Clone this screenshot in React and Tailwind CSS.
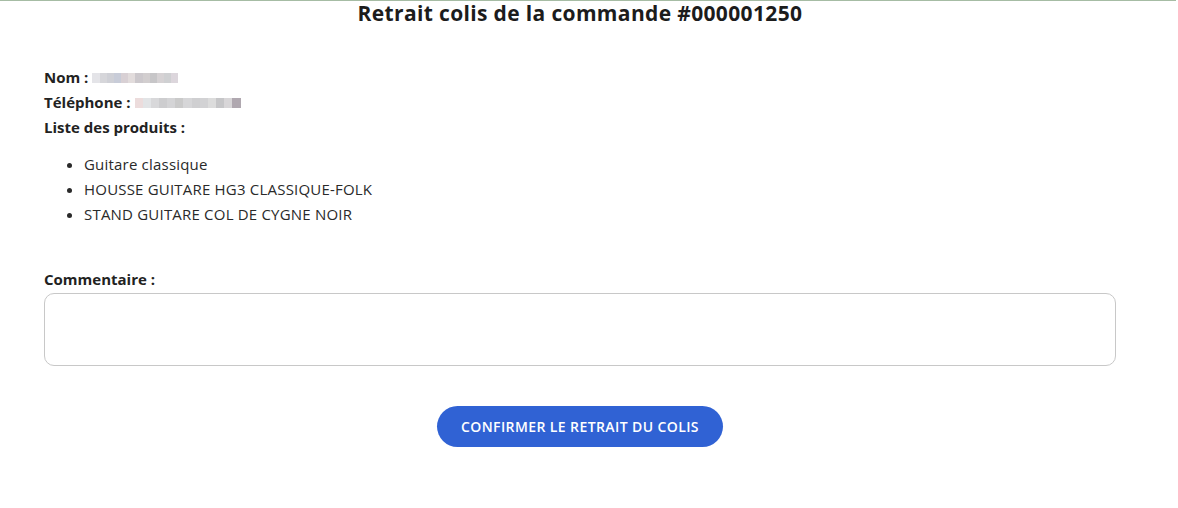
import React from "react";

function Blur({ w, colors }) {
  return (
    <span className="inline-flex align-middle h-[10px]" style={{ width: w }}>
      {colors.map((c, i) => (
        <span key={i} className="flex-1 h-full" style={{ background: c }} />
      ))}
    </span>
  );
}

export default function App() {
  return (
    <div className="w-[1178px] h-[508px] bg-white text-[#222] overflow-hidden" style={{ fontFamily: '"Open Sans", "Noto Sans", sans-serif' }}>
      <div className="h-px w-[1176px] bg-[#a6bca4]" />
      <div className="w-[1160px] px-[44px]">
        <h1 className="text-center text-[21px] font-bold leading-[25px] text-[#1c1c1c] tracking-[0.35px]">
          Retrait colis de la commande #000001250
        </h1>
        <div className="mt-[39px] text-[15px] leading-[25px]">
          <div className="font-bold flex items-center gap-[4px]">
            <span>Nom :</span>
            <Blur w={86} colors={["#e4e4e8", "#d6d6da", "#cfd0d6", "#c8ccd8", "#d8d0d4", "#e2dcdc", "#ccc8cc", "#d2cecf", "#c7c6c8", "#d6d2d4", "#cfd0d2", "#dcd6dc"]} />
          </div>
          <div className="font-bold flex items-center gap-[4px]">
            <span>Téléphone :</span>
            <Blur w={106} colors={["#ecdcdc", "#e2e4e6", "#d8d8da", "#cdcdcf", "#d4d4d6", "#cacaca", "#d6d6d8", "#cfcfd1", "#d2d2d4", "#dcdcdc", "#c6c6c8", "#d8d6d8", "#b0a8b0"]} />
          </div>
          <div className="font-bold">Liste des produits :</div>
          <ul className="list-disc pl-[40px] mt-[12px] text-[#2a2a2a] tracking-[0.2px]">
            <li>Guitare classique</li>
            <li>HOUSSE GUITARE HG3 CLASSIQUE-FOLK</li>
            <li>STAND GUITARE COL DE CYGNE NOIR</li>
          </ul>
          <div className="font-bold mt-[40px]">Commentaire :</div>
          <textarea className="mt-[1px] block w-full h-[73px] border border-[#c8c8c8] rounded-[10px] resize-none outline-none" />
          <div className="flex justify-center mt-[40px]">
            <button className="h-[41px] w-[286px] rounded-full bg-[#3062d4] text-white text-[14px] font-semibold tracking-[0.4px]">
              CONFIRMER LE RETRAIT DU COLIS
            </button>
          </div>
        </div>
      </div>
    </div>
  );
}
